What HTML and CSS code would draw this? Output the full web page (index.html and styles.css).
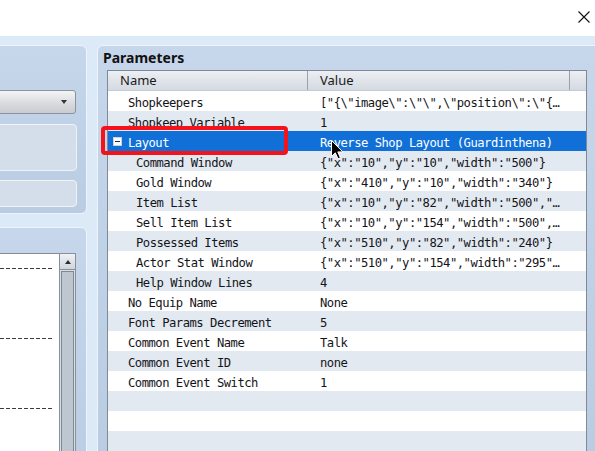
FILE: index.html
```html
<!DOCTYPE html>
<html lang="en">
<head>
<meta charset="utf-8">
<title>Plugin Parameters</title>
<link rel="stylesheet" href="styles.css">
</head>
<body>
<div class="window">
  <header class="titlebar">
    <button class="close" type="button" aria-label="Close">
      <svg width="12" height="12" viewBox="0 0 12 12"><path d="M0.5 0.5L11.5 11.5M11.5 0.5L0.5 11.5" stroke="#111" stroke-width="1.1" fill="none"/></svg>
    </button>
  </header>

  <main class="workspace">
    <div class="side">
      <section class="panel panel-top">
        <div class="combo"><span class="combo-arrow"></span></div>
        <div class="field field-tall"></div>
        <div class="field field-short"></div>
      </section>

      <section class="panel panel-help">
        <div class="help">
          <div class="help-text">
            <div class="help-line rule"></div>
            <div class="help-line"></div>
            <div class="help-line"></div>
            <div class="help-line rule"></div>
            <div class="help-line"></div>
            <div class="help-line"></div>
            <div class="help-line rule"></div>
            <div class="help-line"></div>
            <div class="help-line rule"></div>
            <div class="help-line note">your</div>
          </div>
          <div class="scrollbar">
            <div class="sb-up"></div>
            <div class="sb-thumb"></div>
          </div>
        </div>
      </section>
    </div>

    <section class="panel params">
      <h2 class="params-title">Parameters</h2>
      <div class="grid">
        <div class="grid-head">
          <div class="hcell">Name</div>
          <div class="hcell">Value</div>
          <div class="hcell"></div>
        </div>
        <div class="grid-body">
          <div class="row"><div class="name">Shopkeepers</div><div class="value">["{\"image\":\"\",\"position\":\"{…</div></div>
          <div class="row"><div class="name">Shopkeep Variable</div><div class="value">1</div></div>
          <div class="row selected"><div class="name"><span class="toggle"></span>Layout</div><div class="value">Reverse Shop Layout (Guardinthena)</div></div>
          <div class="row"><div class="name child">Command Window</div><div class="value">{"x":"10","y":"10","width":"500"}</div></div>
          <div class="row"><div class="name child">Gold Window</div><div class="value">{"x":"410","y":"10","width":"340"}</div></div>
          <div class="row"><div class="name child">Item List</div><div class="value">{"x":"10","y":"82","width":"500","…</div></div>
          <div class="row"><div class="name child">Sell Item List</div><div class="value">{"x":"10","y":"154","width":"500",…</div></div>
          <div class="row"><div class="name child">Possessed Items</div><div class="value">{"x":"510","y":"82","width":"240"}</div></div>
          <div class="row"><div class="name child">Actor Stat Window</div><div class="value">{"x":"510","y":"154","width":"295"…</div></div>
          <div class="row"><div class="name child">Help Window Lines</div><div class="value">4</div></div>
          <div class="row"><div class="name">No Equip Name</div><div class="value">None</div></div>
          <div class="row"><div class="name">Font Params Decrement</div><div class="value">5</div></div>
          <div class="row"><div class="name">Common Event Name</div><div class="value">Talk</div></div>
          <div class="row"><div class="name">Common Event ID</div><div class="value">none</div></div>
          <div class="row"><div class="name">Common Event Switch</div><div class="value">1</div></div>
          <div class="row"></div>
          <div class="row"></div>
          <div class="row"></div>
        </div>

        <div class="focus-ring"></div>
        <svg class="pointer" width="13" height="20" viewBox="0 0 13 20"><path d="M0.5 0.5V16.5L4.3 12.8L7 18.8L9.4 17.8L6.8 11.9H11.8Z" fill="#000" stroke="#fff" stroke-width="1" stroke-linejoin="round"/></svg>
      </div>
    </section>
  </main>
</div>
</body>
</html>
```

FILE: styles.css
```css
* {
  box-sizing: border-box;
}

html,
body {
  margin: 0;
}

body {
  width: 595px;
  height: 451px;
  overflow: hidden;
  background: #fff;
  font-family: "Noto Sans", "DejaVu Sans", sans-serif;
  color: #16161c;
}

.window {
  display: flex;
  flex-direction: column;
  height: 451px;
}

/* title bar with the close glyph */
.titlebar {
  flex: none;
  height: 36px;
  display: flex;
  justify-content: flex-end;
  align-items: flex-start;
  padding: 11px 5px 0 0;
  background: #fff;
}

.close {
  display: block;
  width: 12px;
  height: 12px;
  padding: 0;
  border: 0;
  background: none;
}

.close svg {
  display: block;
}

/* blue work area */
.workspace {
  flex: 1;
  min-height: 0;
  display: flex;
  gap: 10px;
  padding-top: 9px;
  background: #dce9f7;
  overflow: hidden;
}

.panel {
  border: 1px solid #eef4fb;
  border-radius: 6px;
  background: linear-gradient(#c6d7eb, #b9cce2);
}

.side {
  flex: none;
  width: 127px;
  margin-left: -40px;
  display: flex;
  flex-direction: column;
  gap: 13px;
}

.panel-top {
  flex: none;
  height: 169px;
  padding: 44px 9px 6px 10px;
  display: flex;
  flex-direction: column;
}

.combo {
  height: 24px;
  margin-right: 1px;
  border: 1px solid #8c939b;
  border-radius: 3px;
  background: linear-gradient(#f3f4f5, #d9dcdf 55%, #c8ccd0);
  display: flex;
  align-items: center;
  justify-content: flex-end;
  padding-right: 8px;
}

.combo-arrow {
  width: 0;
  height: 0;
  border-left: 3.5px solid transparent;
  border-right: 3.5px solid transparent;
  border-top: 4px solid #333;
}

.field {
  border: 1px solid #eef3f8;
  border-radius: 4px;
  background: #d3deea;
}

.field-tall {
  height: 47px;
  margin-top: 10px;
}

.field-short {
  height: 27px;
  margin-top: 9px;
}

.panel-help {
  flex: 1;
  margin-bottom: -12px;
  padding: 25px 10px 0 10px;
  display: flex;
  flex-direction: column;
}

.help {
  flex: 1;
  display: flex;
}

.help-text {
  flex: 1;
  background: #fff;
  border-top: 1px solid #838d98;
  padding: 4px 0 0 3px;
  overflow: hidden;
}

.help-line {
  height: 20px;
  line-height: 20px;
  white-space: nowrap;
  font-size: 12.5px;
  color: #1a1a1a;
}

/* dashed separator between help sections */
.help-line.rule::before {
  content: "";
  display: block;
  width: 76px;
  height: 1px;
  margin: 10px 0 0 2px;
  background: repeating-linear-gradient(to right, #3c3c3c 0 4px, transparent 4px 6px);
}

.help-line.note {
  padding-left: 32px;
  line-height: 17px;
}

.scrollbar {
  flex: none;
  width: 17px;
  border: 1px solid #87919b;
  background: #d9dee3;
  display: flex;
  flex-direction: column;
}

.sb-up {
  height: 16px;
  border-bottom: 1px solid #87919b;
  background: linear-gradient(#eff2f5, #cfd5db);
  display: flex;
  align-items: center;
  justify-content: center;
}

.sb-up::before {
  content: "";
  border-left: 3.5px solid transparent;
  border-right: 3.5px solid transparent;
  border-bottom: 4px solid #2d2d2d;
}

.sb-thumb {
  flex: 1;
  margin: 1px 1px 0;
  border: 1px solid #7f8994;
  background: #bec6cf;
}

/* parameter panel */
.params {
  flex: none;
  width: 508px;
  margin-bottom: -12px;
  padding: 3px 0 0 5px;
}

.params-title {
  margin: 0 0 3px;
  font-size: 14px;
  line-height: 18px;
  font-weight: 700;
  color: #111;
}

.grid {
  position: relative;
  width: 480px;
  margin-left: 4px;
  border: 1px solid #7f8a96;
  border-bottom: 0;
}

.grid-head,
.row {
  display: grid;
  grid-template-columns: 200px 262px 16px;
}

.grid-head {
  height: 20px;
  border-bottom: 1px solid #c3cbd4;
  background: linear-gradient(#eceff3, #d4dae1);
}

.hcell {
  font-size: 13px;
  line-height: 19px;
  padding-left: 12px;
  color: #1a1a1a;
  border-right: 1px solid #98a2ad;
}

.hcell:last-child {
  border-right: 0;
}

.row {
  height: 20px;
  line-height: 24px;
  font-family: "DejaVu Sans Mono", "Liberation Mono", monospace;
  font-size: 12.2px;
  letter-spacing: -0.5px;
  white-space: nowrap;
  background: #fff;
  color: #141419;
}

.row:nth-child(even) {
  background: #e2e9f0;
}

.row.selected {
  background: #1170d8;
  color: #fff;
}

.name {
  padding-left: 20px;
  display: flex;
  align-items: flex-start;
}

.name.child {
  padding-left: 28px;
}

.selected .name {
  padding-left: 5px;
}

.value {
  padding-left: 12px;
}

.toggle {
  position: relative;
  flex: none;
  width: 9px;
  height: 9px;
  margin: 6px 6px 0 0;
  border: 1px solid #c9d3de;
  background: #fff;
}

.toggle::after {
  content: "";
  position: absolute;
  left: 1px;
  right: 1px;
  top: 3px;
  height: 1px;
  background: #1d2c44;
}

/* highlight frame drawn over the active row */
.focus-ring {
  position: absolute;
  left: -7px;
  top: 55px;
  width: 187px;
  height: 29px;
  border: 4px solid #f5131b;
  border-radius: 4px;
}

.pointer {
  position: absolute;
  left: 223px;
  top: 69px;
}
```
